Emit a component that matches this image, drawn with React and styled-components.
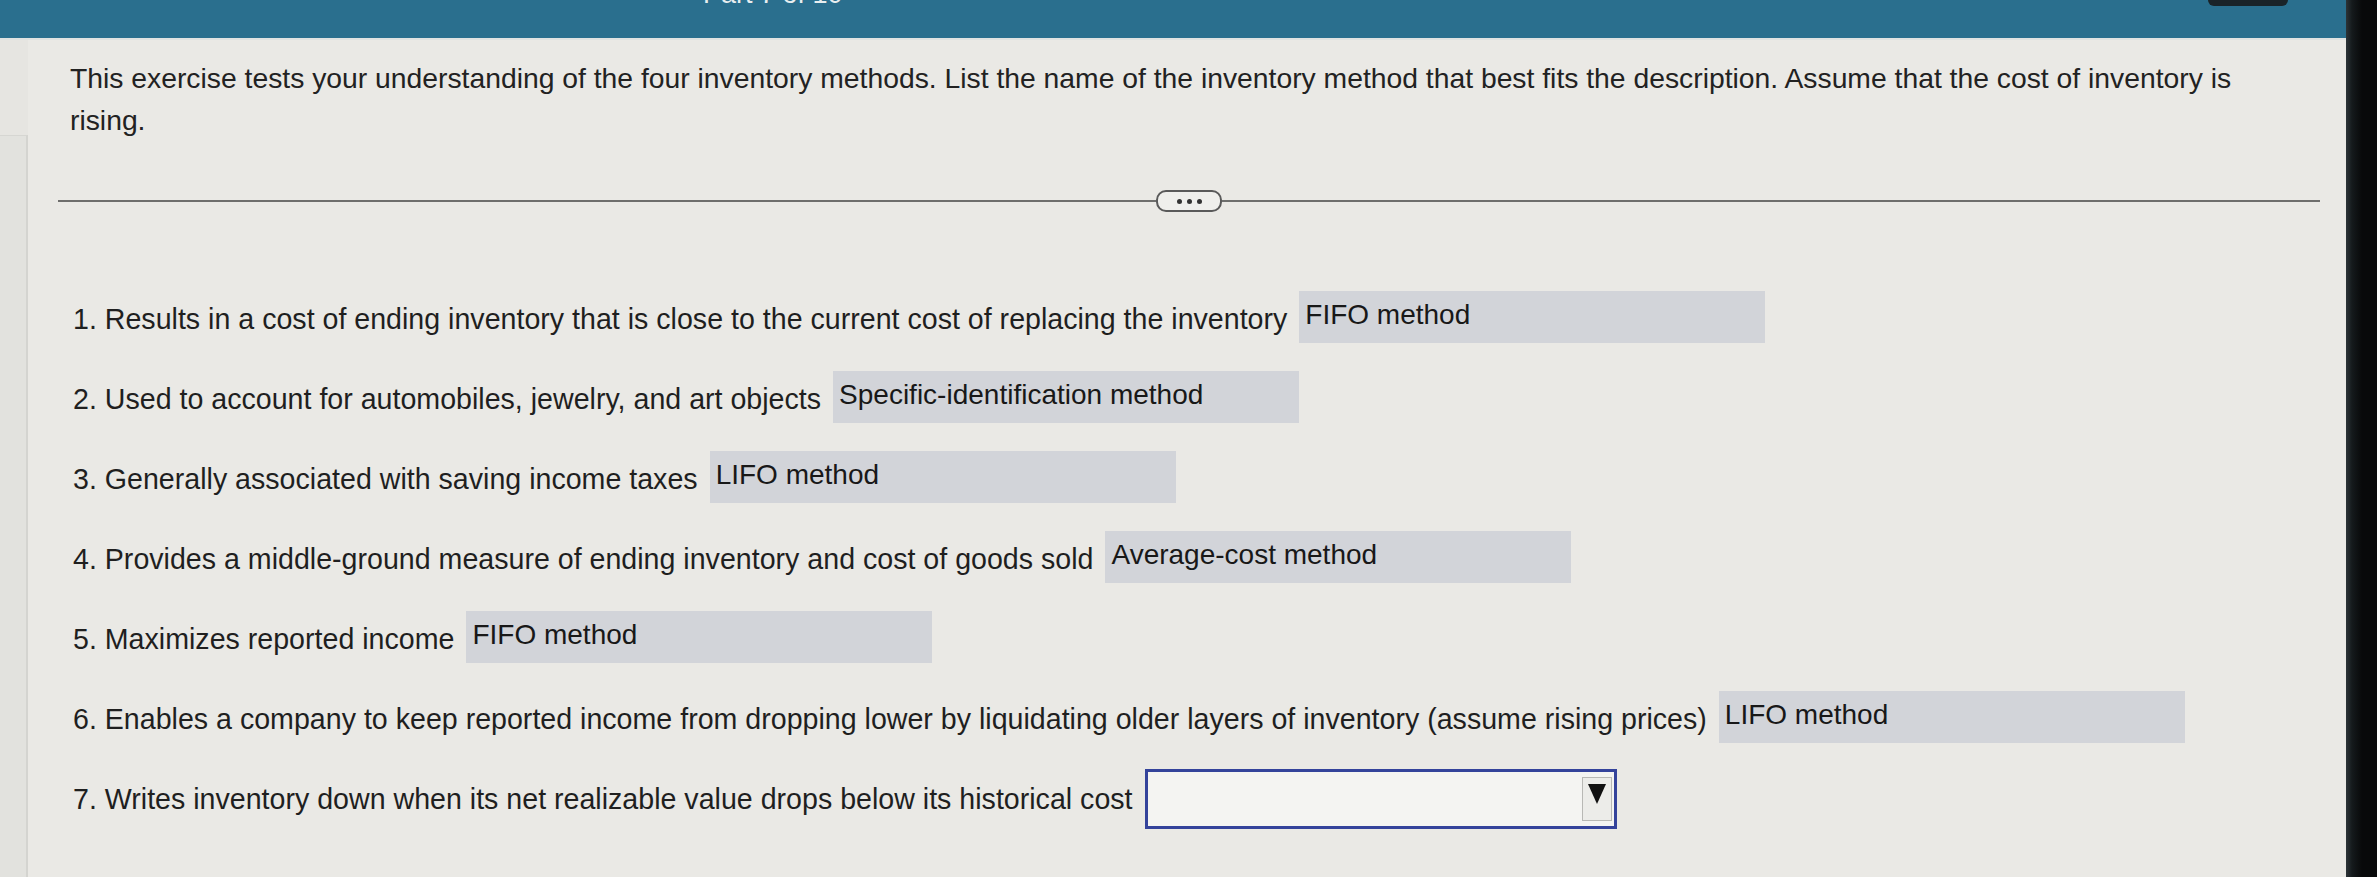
import React from "react";
import styled, { createGlobalStyle } from "styled-components";

const GlobalStyle = createGlobalStyle`
  html, body {
    margin: 0;
    padding: 0;
    background: #0d0f10;
  }
  body {
    font-family: "Liberation Sans", Arial, sans-serif;
  }
`;

export default function App() {
  return (
    <Screen>
      <GlobalStyle />
      <Display>
        <TopBar>
          <span className="part">Part 7 of 10</span>
          <span className="corner" />
        </TopBar>
        <Content>
          <SideStrip>
            <div className="panel" />
          </SideStrip>
          <Main>
            <Intro>
              This exercise tests your understanding of the four inventory methods. List the name of the inventory method
              that best fits the description. Assume that the cost of inventory is rising.
            </Intro>

            <Divider>
              <span className="line" />
              <MoreButton>
                <i />
                <i />
                <i />
              </MoreButton>
              <span className="line" />
            </Divider>

            <QuestionList>
              {questionList.map((q, index) => (
                <Question key={index}>
                  <span className="label">
                    {index + 1}. {q.text}
                  </span>
                  {q.answer ? (
                    <AnswerBox>{q.answer}</AnswerBox>
                  ) : (
                    <SelectBox>
                      <span className="arrowBtn">
                        <span className="tri" />
                      </span>
                    </SelectBox>
                  )}
                </Question>
              ))}
            </QuestionList>
          </Main>
        </Content>
      </Display>
      <Bezel />
    </Screen>
  );
}

const Screen = styled.div`
  display: flex;
  width: 2377px;
  height: 877px;
  overflow: hidden;
`;

const Display = styled.div`
  display: flex;
  flex-direction: column;
  width: 2346px;
  background: #eae9e5;
`;

const Bezel = styled.div`
  flex: 1;
  background: linear-gradient(to right, #2c3438 0px, #151a1c 6px, #08090a 16px);
`;

const TopBar = styled.div`
  display: flex;
  align-items: flex-start;
  justify-content: space-between;
  height: 38px;
  padding: 0 58px 0 703px;
  background: #2a6f8e;
  border-bottom: 2px solid #dfe3e2;
  overflow: hidden;

  .part {
    margin-top: -21px;
    font-size: 27px;
    line-height: 30px;
    color: #e8eef0;
  }

  .corner {
    width: 80px;
    height: 6px;
    background: #1a2328;
    border-radius: 0 0 10px 10px;
  }
`;

const Content = styled.div`
  display: flex;
  flex: 1;
`;

const SideStrip = styled.div`
  display: flex;
  flex-direction: column;
  width: 28px;
  padding-top: 95px;
  background: #e6e5e1;

  .panel {
    flex: 1;
    background: #e2e2de;
    border-top: 1px solid #d6d6d2;
    border-right: 2px solid #d4d4d0;
  }
`;

const Main = styled.div`
  display: flex;
  flex-direction: column;
  flex: 1;
  padding: 17px 26px 0 42px;
`;

const Intro = styled.p`
  margin: 0;
  font-size: 28.3px;
  line-height: 42px;
  color: #222;
  max-width: 2210px;
`;

const Divider = styled.div`
  display: flex;
  align-items: center;
  margin: 49px 0 0 -12px;

  .line {
    flex: 1;
    height: 2px;
    background: #6e6e6c;
  }
`;

const MoreButton = styled.span`
  display: flex;
  align-items: center;
  justify-content: center;
  gap: 5px;
  width: 62px;
  height: 18px;
  border: 2px solid #5a5a5a;
  border-radius: 10px;
  background: #efefec;

  i {
    width: 5px;
    height: 5px;
    border-radius: 50%;
    background: #333;
  }
`;

const QuestionList = styled.ul`
  display: flex;
  flex-direction: column;
  gap: 29px;
  margin: 79px 0 0 0;
  padding: 0;
  list-style: none;
`;

const Question = styled.li`
  display: flex;
  align-items: center;
  gap: 12px;
  height: 51px;
  padding-left: 3px;
  color: #1f1f1f;

  .label {
    font-size: 28.6px;
    white-space: nowrap;
    padding-top: 6px;
  }
`;

const AnswerBox = styled.span`
  display: flex;
  align-items: center;
  box-sizing: border-box;
  width: 466px;
  height: 52px;
  padding: 0 0 4px 6px;
  font-size: 28px;
  background: #d2d4d9;
  color: #181818;
`;

const SelectBox = styled.span`
  display: flex;
  align-items: center;
  justify-content: flex-end;
  box-sizing: border-box;
  width: 472px;
  height: 60px;
  margin-top: 4px;
  padding-right: 2px;
  background: #f4f4f2;
  border: 3px solid #34439b;

  .arrowBtn {
    display: flex;
    align-items: center;
    justify-content: center;
    box-sizing: border-box;
    width: 30px;
    height: 44px;
    background: #ecece9;
    border: 1px solid #b8b8b5;
    padding-bottom: 10px;
  }

  .tri {
    width: 0;
    height: 0;
    border-left: 9px solid transparent;
    border-right: 9px solid transparent;
    border-top: 20px solid #111;
  }
`;

const questionList = [
  {
    text: "Results in a cost of ending inventory that is close to the current cost of replacing the inventory",
    answer: "FIFO method",
  },
  { text: "Used to account for automobiles, jewelry, and art objects", answer: "Specific-identification method" },
  { text: "Generally associated with saving income taxes", answer: "LIFO method" },
  {
    text: "Provides a middle-ground measure of ending inventory and cost of goods sold",
    answer: "Average-cost method",
  },
  { text: "Maximizes reported income", answer: "FIFO method" },
  {
    text: "Enables a company to keep reported income from dropping lower by liquidating older layers of inventory (assume rising prices)",
    answer: "LIFO method",
  },
  { text: "Writes inventory down when its net realizable value drops below its historical cost", answer: null },
];
